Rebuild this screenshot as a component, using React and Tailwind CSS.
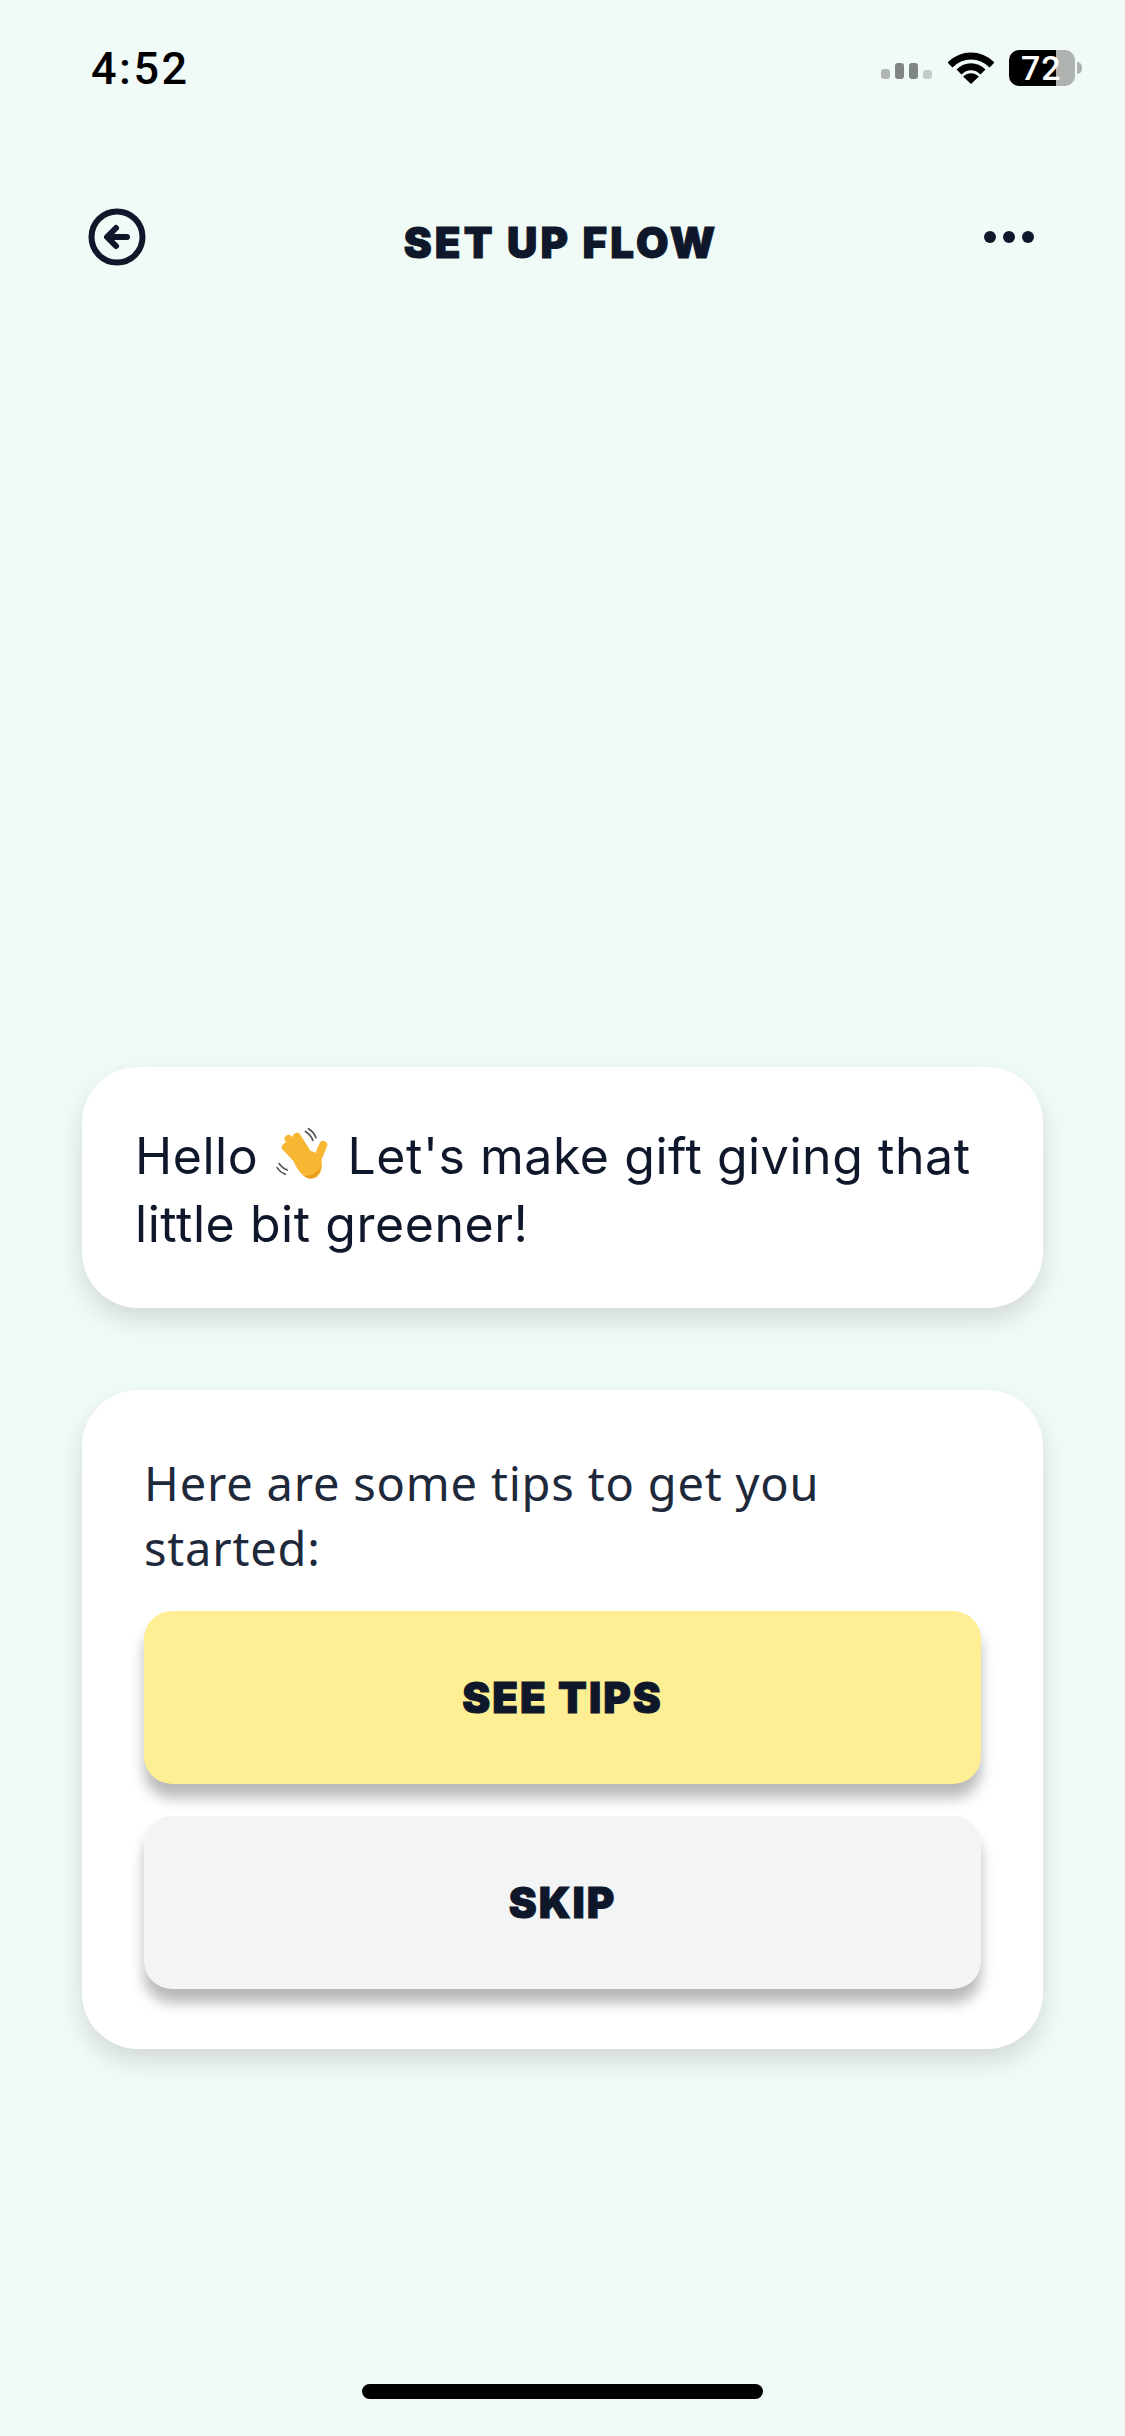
import React from "react";

const WaveHand = () => (
  <svg viewBox="60 20 170 170" className="inline-block w-[58px] h-[58px] mr-[2px] align-[-10px]">
    <g stroke="#555" strokeWidth="5" fill="none" strokeLinecap="round">
      <path d="M155 36c10 6 18 16 22 26" />
      <path d="M164 28c10 6 18 16 22 26" />
      <path d="M72 142c6 9 14 16 24 19" />
      <path d="M78 130c6 9 14 16 24 19" />
    </g>
    <g stroke="#f7b733" strokeLinecap="round" fill="none" strokeWidth="24">
      <path d="M98 82l44 46" />
      <path d="M106 58l50 58" />
      <path d="M130 52l38 60" />
      <path d="M207 76l-20 48" />
    </g>
    <path d="M116 112c12-20 52-30 78-6 16 18 10 50-4 62-12 10-28 8-40-2-14-12-26-30-34-54z" fill="#f7b733" />
    <path d="M150 166c14 12 32 10 44-8 4-8 6-14 6-20-6 16-24 30-50 28z" fill="#e89a1c" />
  </svg>
);

const App = () => {
  return (
    <div className="w-[1125px] h-[2436px] bg-[#f0faf7] flex flex-col overflow-hidden" style={{ fontFamily: "Inter, sans-serif" }}>
      {/* status bar */}
      <div className="flex items-center justify-between pl-[91px] pr-[43px] pt-[44px] h-[92px]">
        <span className="text-[45px] leading-[48px] font-medium text-black tracking-[2.5px] mt-[2px]" style={{ fontFamily: "Roboto, sans-serif" }}>4:52</span>
        <div className="flex items-center">
          <svg width="52" height="18" viewBox="0 0 52 18" className="mt-[8px]">
            <rect x="0" y="6" width="9" height="10" rx="3" fill="#b0b5b2" />
            <rect x="14" y="0" width="9" height="16" rx="3" fill="#7f8583" />
            <rect x="28" y="0" width="9" height="16" rx="3" fill="#7f8583" />
            <rect x="42" y="7" width="9" height="9" rx="3" fill="#c5cbc8" />
          </svg>
          <svg width="46" height="34" viewBox="0 0 46 34" className="ml-[15px] mt-[-2px]">
            <path d="M2 15C14 3 32 3 44 15" stroke="#000" strokeWidth="7" fill="none" />
            <path d="M11 22C18 15 28 15 35 22" stroke="#000" strokeWidth="7" fill="none" />
            <path d="M15 26.500C20 22 26 22 31 26.500L23 34z" fill="#000" />
          </svg>
          <div className="relative ml-[15px] w-[66px] h-[36px] flex">
            <div className="w-[47px] bg-black rounded-l-[10px]" />
            <div className="flex-1 bg-[#aeb3b0] rounded-r-[10px]" />
            <span className="absolute inset-0 flex items-center pl-[12px] text-[34px] leading-none font-medium text-white tracking-[1px]" style={{ fontFamily: "Roboto, sans-serif" }}>72</span>
          </div>
          <div className="ml-[2px] w-[5px] h-[12px] rounded-r-full bg-[#aeb3b0]" />
        </div>
      </div>

      {/* header */}
      <div className="grid grid-cols-[1fr_auto_1fr] items-center pl-[88px] pr-[91px] mt-[114px]">
        <svg width="58" height="58" viewBox="0 0 58 58" fill="none" stroke="#0f172a" strokeLinecap="round" strokeLinejoin="round">
          <circle cx="29" cy="29" r="25.500" strokeWidth="6" />
          <path d="M39 29H20M28 20l-9 9 9 9" strokeWidth="6" />
        </svg>
        <h1 className="text-[42px] leading-[48px] font-black text-[#0f172a] mt-[13px] tracking-[3.1px] [-webkit-text-stroke:1px_#0f172a]">SET UP FLOW</h1>
        <div className="flex justify-end gap-[7px]">
          <span className="w-[12px] h-[12px] rounded-full bg-[#0f172a]" />
          <span className="w-[12px] h-[12px] rounded-full bg-[#0f172a]" />
          <span className="w-[12px] h-[12px] rounded-full bg-[#0f172a]" />
        </div>
      </div>

      {/* cards */}
      <div className="flex flex-col gap-[82px] mx-[82px] mt-[800px]">
        <div className="bg-white rounded-[56px] shadow-[0_12px_26px_rgba(0,0,0,0.13)] pl-[53px] pr-[30px] pt-[55px] pb-[50px]">
          <p className="text-[50px] leading-[68px] text-[#0f172a] tracking-[0.55px]">
            Hello <WaveHand /> Let's make gift giving that little bit greener!
          </p>
        </div>

        <div className="bg-white rounded-[56px] shadow-[0_12px_26px_rgba(0,0,0,0.13)] px-[62px] pt-[61px] pb-[60px]">
          <p className="text-[47px] leading-[65px] text-[#1e293b] tracking-[0.8px] w-[720px]" style={{ fontFamily: "'Noto Sans', sans-serif" }}>
            Here are some tips to get you started:
          </p>
          <div className="flex flex-col gap-[32px] mt-[30px]">
            <button className="h-[173px] rounded-[28px] bg-[#feee94] shadow-[0_14px_14px_rgba(0,0,0,0.28)] text-[42px] tracking-[2px] font-black text-[#0f172a] [-webkit-text-stroke:1px_#0f172a]">SEE TIPS</button>
            <button className="h-[173px] rounded-[28px] bg-[#f3f4f6] shadow-[0_14px_14px_rgba(0,0,0,0.28)] text-[42px] tracking-[2px] font-black text-[#0f172a] [-webkit-text-stroke:1px_#0f172a]">SKIP</button>
          </div>
        </div>
      </div>

      {/* home indicator */}
      <div className="mt-auto mb-[37px] mx-auto w-[401px] h-[15px] rounded-full bg-black" />
    </div>
  );
};

export default App;
